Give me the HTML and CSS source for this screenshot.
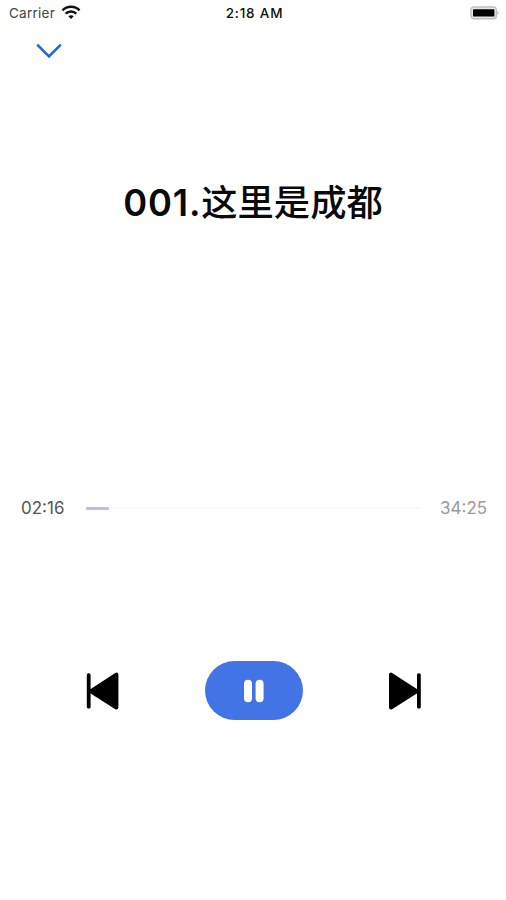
FILE: index.html
```
<!DOCTYPE html>
<html lang="zh">
<head>
    <meta charset="UTF-8">
    <meta name="viewport" content="width=device-width, initial-scale=1.0">
    <title>001.这里是成都</title>
    <link rel="stylesheet" href="styles.css">
</head>

<body>
    <div class="player">
        <div class="status-bar">
            <div class="carrier">
                <span class="carrier-name">Carrier</span>
                <svg class="wifi" width="20" height="14" viewBox="0 0 20 14" fill="none" stroke="#111" stroke-width="2.4">
                    <path d="M1.4 5.3C6.2 0.5 13.8 0.5 18.6 5.3"/>
                    <path d="M4.6 8.7C7.6 5.7 12.4 5.7 15.4 8.7"/>
                    <path d="M7.3 11.2C8.8 9.8 11.2 9.8 12.7 11.2L10 13.9Z" fill="#111" stroke="none"/>
                </svg>
            </div>
            <span class="clock">2:18 AM</span>
            <svg class="battery" width="29" height="14" viewBox="0 0 29 14">
                <rect x="0.9" y="1" width="25.4" height="11.8" rx="2.8" fill="#e8e8e8" stroke="#c0c0c0" stroke-width="1.4"/>
                <rect x="3" y="3.2" width="21.4" height="7.3" rx="0.6" fill="#000"/>
                <path d="M27.3 4.8C29 5.6 29 8.2 27.3 9Z" fill="#b8b8b8"/>
            </svg>
        </div>

        <button class="close-btn" aria-label="Close">
            <svg width="26" height="16" viewBox="0 0 26 16" fill="none" stroke="#1f66d8" stroke-width="2.5">
                <path d="M1.2 1.7L13 13.4L24.8 1.7"/>
            </svg>
        </button>

        <h1 class="title"><span class="number">001.</span>这里是成都</h1>

        <div class="progress">
            <span class="elapsed">02:16</span>
            <div class="track"><div class="track-fill" style="width: 7%"></div></div>
            <span class="duration">34:25</span>
        </div>

        <div class="controls">
            <button aria-label="Previous">
                <svg width="34" height="38" viewBox="0 0 34 38">
                    <rect x="0.8" y="1.3" width="3.8" height="35.2" rx="1.6"/>
                    <path d="M30.4 2.7V35.5L5 19.2Z" stroke="#000" stroke-width="4" stroke-linejoin="round"/>
                </svg>
            </button>
            <button class="pause-btn" aria-label="Pause">
                <svg width="20" height="24" viewBox="0 0 20 24" fill="#fff">
                    <rect x="0" y="0.8" width="8" height="22.5" rx="4"/>
                    <rect x="11.6" y="0.8" width="8" height="22.5" rx="4"/>
                </svg>
            </button>
            <button aria-label="Next">
                <svg width="34" height="38" viewBox="0 0 34 38">
                    <rect x="29" y="1.3" width="3.8" height="35.2" rx="1.6"/>
                    <path d="M3 2.7V35.5L28.5 19.2Z" stroke="#000" stroke-width="4" stroke-linejoin="round"/>
                </svg>
            </button>
        </div>
    </div>
</body>

</html>
```
FILE: styles.css
```
body {
    margin: 0;
    background-color: #fff;
    font-family: Inter, "Noto Sans CJK SC", sans-serif;
    color: #111;
}

button {
    display: flex;
    align-items: center;
    justify-content: center;
    padding: 0;
    border: none;
    background: none;
}

svg {
    display: block;
}

.player {
    height: 900px;
    overflow: hidden;
}

.status-bar {
    display: grid;
    grid-template-columns: 1fr auto 1fr;
    align-items: center;
    height: 26px;
    padding: 0 7px 0 9px;
}

.carrier {
    display: flex;
    align-items: center;
    gap: 6px;
}

.carrier-name {
    font-size: 13.5px;
    letter-spacing: 0.25px;
    color: #444;
}

.wifi {
    margin-top: -2px;
}

.clock {
    font-size: 13.5px;
    font-weight: 500;
    letter-spacing: 0.8px;
    margin-right: -1px;
}

.battery {
    justify-self: end;
}

.close-btn {
    margin: 17px 0 0 36px;
}

.title {
    margin: 117px 0 0;
    height: 54px;
    line-height: 54px;
    text-align: center;
    font-size: 36.3px;
    font-weight: 500;
    white-space: nowrap;
    color: #0a0a0a;
}

.number {
    font-weight: 600;
    letter-spacing: 0.8px;
}

.progress {
    display: flex;
    align-items: center;
    height: 24px;
    margin-top: 266px;
    padding: 0 19px 0 21px;
    font-size: 17px;
}

.elapsed {
    width: 65px;
    color: #555;
}

.track {
    flex: 1;
    height: 2px;
    background-color: #fafafa;
}

.track-fill {
    height: 3px;
    border-radius: 1px;
    background-color: #b6bff0;
}

.duration {
    width: 47px;
    margin-left: 19px;
    color: #999;
}

/* Playback buttons */
.controls {
    display: flex;
    align-items: center;
    justify-content: space-between;
    margin-top: 141px;
    padding: 0 84px 0 86px;
}

.pause-btn {
    width: 98px;
    height: 59px;
    border-radius: 30px;
    background-color: #4274e5;
}
```
